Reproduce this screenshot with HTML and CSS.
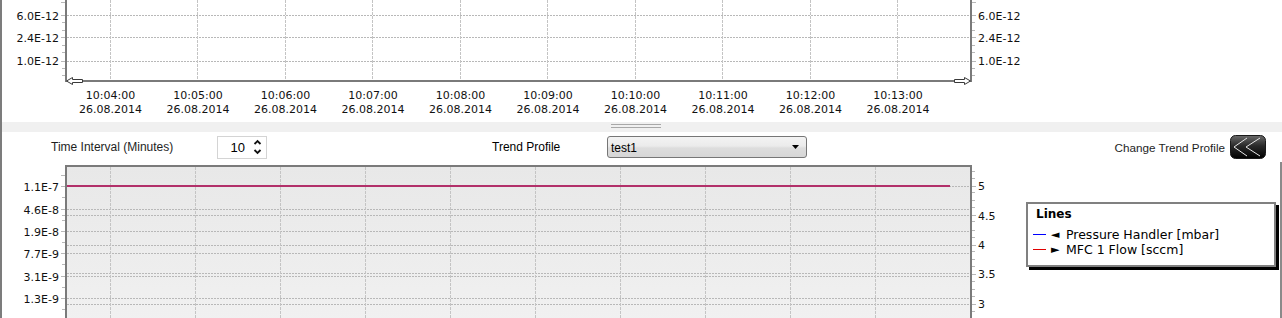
FILE: index.html
```html
<!DOCTYPE html>
<html>
<head>
<meta charset="utf-8">
<link rel="stylesheet" href="styles.css">
</head>
<body>
<div class="app">
  <section class="top-chart">
    <svg class="chart" width="1280" height="122" viewBox="0 0 1280 122">
      <g transform="translate(-2,0)">
        <path class="grid" d="M67 15.5H970M67 37.5H970M67 61.5H970"/>
        <path class="vgrid" d="M110.5 0V80M197.5 0V80M285.5 0V80M372.5 0V80M460.5 0V80M547.5 0V80M635.5 0V80M722.5 0V80M810.5 0V80M897.5 0V80"/>
        <path class="tick" d="M61 2.5H65M61 15.5H65M62 22.5H65M62 30.5H65M61 37.5H65M62 45.5H65M62 52.5H65M61 61.5H65M62 68.5H65M62 75.5H65"/>
        <path class="tick" d="M972 2.5H976M972 15.5H976M972 22.5H975M972 30.5H975M972 37.5H976M972 45.5H975M972 52.5H975M972 61.5H976M972 68.5H975M972 75.5H975"/>
        <path class="axis" d="M66 0V82M971 0V82M65 81H972"/>
        <polygon class="arrow" points="66.5,81 72.5,77.5 72.5,79.5 82.5,79.5 82.5,82.5 72.5,82.5 72.5,84.5"/>
        <polygon class="arrow" points="970.5,81 964.5,77.5 964.5,79.5 954.5,79.5 954.5,82.5 964.5,82.5 964.5,84.5"/>
        <g class="lbl" text-anchor="end">
          <text x="59" y="20">6.0E-12</text>
          <text x="59" y="42">2.4E-12</text>
          <text x="59" y="65">1.0E-12</text>
        </g>
        <g class="lbl">
          <text x="978" y="20">6.0E-12</text>
          <text x="978" y="42">2.4E-12</text>
          <text x="978" y="65">1.0E-12</text>
        </g>
        <g class="lbl" text-anchor="middle">
          <text x="110.5" y="99">10:04:00</text><text x="110.5" y="113">26.08.2014</text>
          <text x="198" y="99">10:05:00</text><text x="198" y="113">26.08.2014</text>
          <text x="285.5" y="99">10:06:00</text><text x="285.5" y="113">26.08.2014</text>
          <text x="373" y="99">10:07:00</text><text x="373" y="113">26.08.2014</text>
          <text x="460.5" y="99">10:08:00</text><text x="460.5" y="113">26.08.2014</text>
          <text x="548" y="99">10:09:00</text><text x="548" y="113">26.08.2014</text>
          <text x="635.5" y="99">10:10:00</text><text x="635.5" y="113">26.08.2014</text>
          <text x="723" y="99">10:11:00</text><text x="723" y="113">26.08.2014</text>
          <text x="810.5" y="99">10:12:00</text><text x="810.5" y="113">26.08.2014</text>
          <text x="898" y="99">10:13:00</text><text x="898" y="113">26.08.2014</text>
        </g>
      </g>
    </svg>
  </section>

  <div class="splitter"><span class="grip"></span></div>

  <div class="controls">
    <span class="ti-label">Time Interval (Minutes)</span>
    <div class="spinner">
      <span class="spin-value">10</span>
      <svg class="spin-arrows" width="9" height="16" viewBox="0 0 9 16">
        <polyline points="1.5,5 4.5,2 7.5,5"/>
        <polyline points="1.5,11 4.5,14 7.5,11"/>
      </svg>
    </div>
    <span class="tp-label">Trend Profile</span>
    <div class="dropdown">
      <span class="dd-value">test1</span>
      <svg class="dd-arrow" width="7" height="4" viewBox="0 0 7 4"><polygon points="0,0 7,0 3.5,4"/></svg>
    </div>
    <span class="spacer"></span>
    <span class="ctp-label">Change Trend Profile</span>
    <div class="btn">
      <svg width="36" height="24" viewBox="0 0 36 24">
        <defs>
          <linearGradient id="bg" x1="0" y1="0" x2="0" y2="1">
            <stop offset="0" stop-color="#6a6a6a"/>
            <stop offset="0.45" stop-color="#2a2a2a"/>
            <stop offset="1" stop-color="#000"/>
          </linearGradient>
        </defs>
        <rect x="0.5" y="0.5" width="35" height="23" rx="5" fill="url(#bg)" stroke="#1a1a1a"/>
        <polyline class="chev" points="17,3 4,12 17,21"/>
        <polyline class="chev" points="30,3 16,12 30,21"/>
      </svg>
    </div>
  </div>

  <section class="bottom-chart">
    <svg class="chart" width="1280" height="156" viewBox="0 0 1280 156">
      <defs>
        <linearGradient id="plotbg" x1="0" y1="0" x2="0" y2="1">
          <stop offset="0" stop-color="#e8e8e8"/>
          <stop offset="1" stop-color="#f1f1f1"/>
        </linearGradient>
      </defs>
      <g transform="translate(-2,-162)">
        <rect x="66" y="166" width="905" height="160" fill="url(#plotbg)"/>
        <path class="grid" d="M67 186.5H970M67 209.5H970M67 215.5H970M67 231.5H970M67 245.5H970M67 253.5H970M67 273.5H970M67 276.5H970M67 298.5H970M67 304.5H970"/>
        <path class="vgrid" d="M110.5 167V318M195.5 167V318M280.5 167V318M365.5 167V318M450.5 167V318M535.5 167V318M620.5 167V318M705.5 167V318M790.5 167V318M875.5 167V318"/>
        <path class="tick" d="M61 175.5H65M61 186.5H65M62 197.5H65M61 209.5H65M62 215.5H65M62 220.5H65M61 231.5H65M62 242.5H65M61 253.5H65M62 264.5H65M61 276.5H65M62 287.5H65M61 298.5H65M62 309.5H65"/>
        <path class="tick" d="M972 171.5H975M972 178.5H975M972 186.5H976M972 192.5H975M972 200.5H975M972 207.5H975M972 215.5H976M972 221.5H975M972 230.5H975M972 237.5H975M972 245.5H976M972 251.5H975M972 259.5H975M972 266.5H975M972 274.5H976M972 281.5H975M972 289.5H975M972 296.5H975M972 304.5H976M972 311.5H975"/>
        <path class="trend" d="M67 186H950"/>
        <path class="axis" d="M65 166H972M66 165V318M971 165V318"/>
        <g class="lbl" text-anchor="end">
          <text x="59" y="191">1.1E-7</text>
          <text x="59" y="214">4.6E-8</text>
          <text x="59" y="236">1.9E-8</text>
          <text x="59" y="258">7.7E-9</text>
          <text x="59" y="281">3.1E-9</text>
          <text x="59" y="303">1.3E-9</text>
        </g>
        <g class="lbl">
          <text x="978" y="190">5</text>
          <text x="978" y="220">4.5</text>
          <text x="978" y="249">4</text>
          <text x="978" y="278">3.5</text>
          <text x="978" y="308">3</text>
        </g>
      </g>
    </svg>
    <div class="legend">
      <div class="legend-title">Lines</div>
      <div class="legend-item"><span class="swatch blue"></span><span class="ptr">&#9668;</span><span>Pressure Handler [mbar]</span></div>
      <div class="legend-item"><span class="swatch red"></span><span class="ptr">&#9658;</span><span>MFC 1 Flow [sccm]</span></div>
    </div>
  </section>
</div>
</body>
</html>
```

FILE: styles.css
```css
html, body {
  margin: 0;
  padding: 0;
  background: #ffffff;
}

body {
  font-family: "Liberation Sans", Arial, sans-serif;
  color: #000;
}

.app {
  width: 1282px;
  height: 318px;
  box-sizing: border-box;
  border-left: 2px solid #7c7c7c;
  overflow: hidden;
}

.chart {
  display: block;
}

.grid {
  fill: none;
  stroke: #b8b8b8;
  stroke-width: 1;
  stroke-dasharray: 2 1;
}

.vgrid {
  fill: none;
  stroke: #c4c4c4;
  stroke-width: 1;
  stroke-dasharray: 3 1;
}

.tick {
  fill: none;
  stroke: #b8b8b8;
  stroke-width: 1;
}

.axis {
  fill: none;
  stroke: #7a7a7a;
  stroke-width: 2;
}

.arrow {
  fill: #ffffff;
  stroke: #3a3a3a;
  stroke-width: 1;
}

.trend {
  fill: none;
  stroke: #b2306a;
  stroke-width: 2;
}

.lbl {
  font-family: "DejaVu Sans", Verdana, sans-serif;
  font-size: 11px;
  fill: #111;
}

/* splitter */
.splitter {
  height: 10px;
  background: #f0f0f0;
  display: flex;
  align-items: flex-start;
}

.grip {
  margin-left: 609px;
  margin-top: 2px;
  width: 50px;
  height: 2px;
  border-top: 1px solid #a8a8a8;
  border-bottom: 1px solid #a8a8a8;
}

/* controls */
.controls {
  height: 30px;
  display: flex;
  align-items: center;
  font-size: 12px;
}

.ti-label {
  margin-left: 49px;
  width: 166px;
  color: #1e1e1e;
}

.spinner {
  width: 50px;
  height: 23px;
  box-sizing: border-box;
  border: 1px solid #d4d4d4;
  background: #fff;
  display: flex;
  align-items: center;
  justify-content: flex-end;
  padding-right: 4px;
  font-size: 13px;
}

.spin-value {
  margin-right: 8px;
}

.spin-arrows polyline {
  fill: none;
  stroke: #111;
  stroke-width: 1.8;
}

.tp-label {
  margin-left: 225px;
  width: 115px;
}

.dropdown {
  width: 200px;
  height: 22px;
  box-sizing: border-box;
  border: 1px solid #767676;
  border-radius: 3px;
  background: linear-gradient(#f3f3f3 0%, #ebebeb 45%, #dddddd 55%, #d6d6d6 100%);
  display: flex;
  align-items: center;
  padding: 0 4px 0 3px;
}

.dd-value {
  flex: 1;
  padding-top: 2px;
}

.dd-arrow {
  margin-right: 3px;
}

.dd-arrow polygon {
  fill: #000;
}

.spacer {
  flex: 1;
}

.ctp-label {
  margin-right: 5px;
  color: #1e1e1e;
  font-size: 11.7px;
}

.btn {
  width: 36px;
  height: 24px;
  margin-right: 16px;
}

.btn svg {
  display: block;
}

.chev {
  fill: none;
  stroke: #e6e6e6;
  stroke-width: 1;
}

/* bottom chart */
.bottom-chart {
  position: relative;
  height: 156px;
  margin-top: 0;
  box-sizing: border-box;
  border-right: 2px solid #8a8a8a;
}

.legend {
  position: absolute;
  left: 1024px;
  top: 40px;
  width: 250px;
  height: 65px;
  box-sizing: border-box;
  border: 2px solid #808080;
  background: #fff;
  box-shadow: 3px 3px 0 #000;
  font-family: "DejaVu Sans", Verdana, sans-serif;
  font-size: 12px;
  color: #000;
  padding: 3px 0 0 5px;
}

.legend-title {
  font-weight: bold;
  padding-left: 3px;
  line-height: 15px;
  margin-bottom: 5px;
}

.legend-item {
  display: flex;
  align-items: center;
  height: 15px;
  line-height: 15px;
  font-size: 12.5px;
}

.swatch {
  width: 13px;
  height: 1px;
  margin-right: 5px;
}

.swatch.blue {
  background: #0000ff;
}

.swatch.red {
  background: #e00000;
}

.ptr {
  font-size: 11px;
  width: 15px;
}
```
